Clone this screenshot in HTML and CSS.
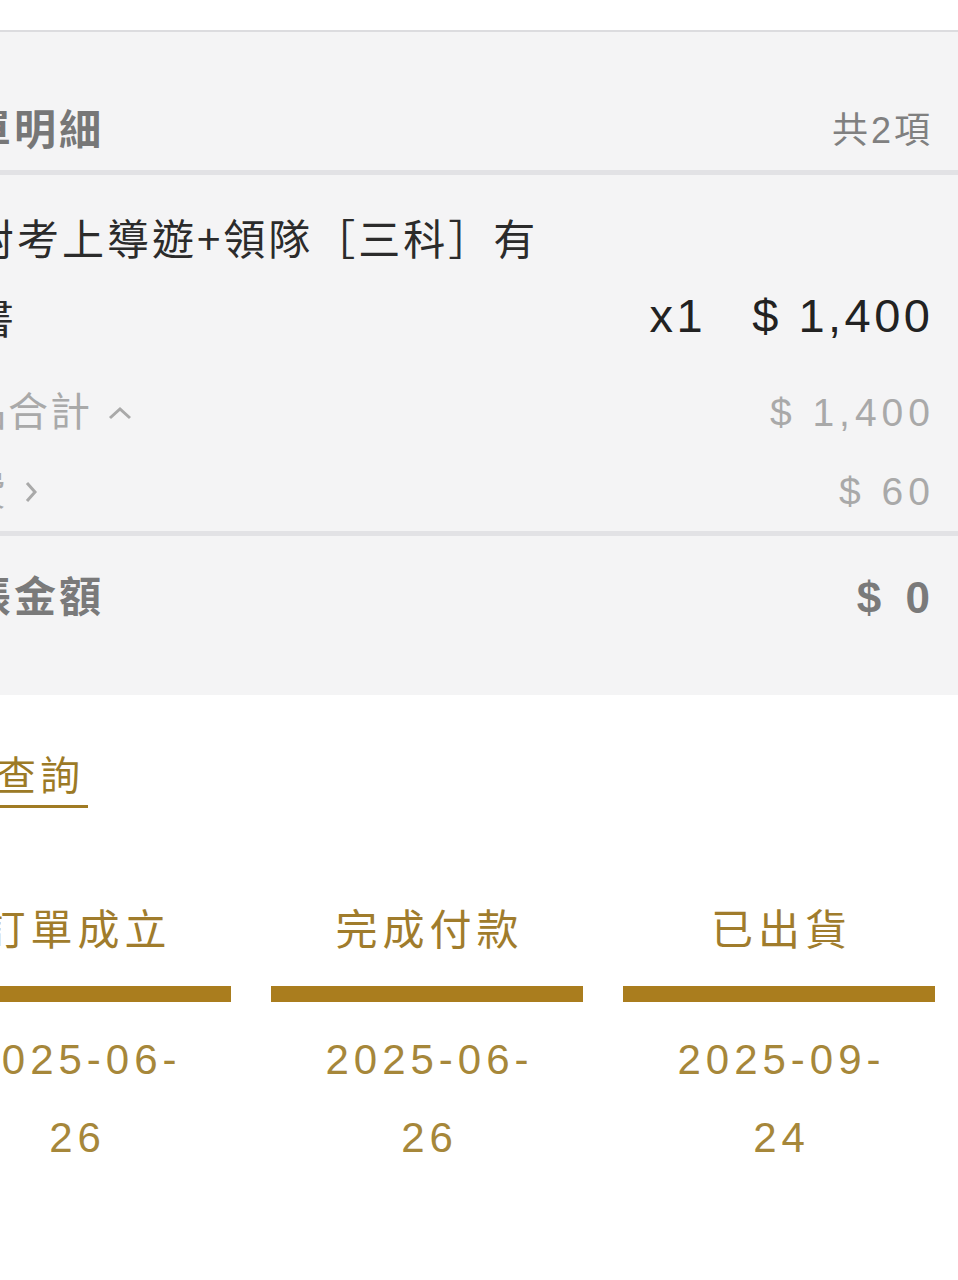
FILE: index.html
```html
<!DOCTYPE html>
<html>

<head>
    <meta charset="UTF-8">
    <title>訂單明細</title>
    <link rel="stylesheet" href="styles.css">
</head>

<body>
    <div class="page">
        <!-- 訂單明細 -->
        <section class="order-panel">
            <div class="panel-head">
                <h2 class="panel-title">訂單明細</h2>
                <span class="panel-count">共2項</span>
            </div>

            <div class="item">
                <p class="item-name">絕對考上導遊+領隊［三科］有聲書</p>
                <div class="item-price">
                    <span class="qty">x1</span>
                    <span class="price">$ 1,400</span>
                </div>
            </div>

            <div class="summary">
                <div class="summary-row">
                    <span class="summary-label">商品合計
                        <svg class="chev" width="24" height="14" viewBox="0 0 24 14">
                            <path d="M2 12 L12 3 L22 12" fill="none" stroke="#a9a9a9" stroke-width="3" />
                        </svg>
                    </span>
                    <span class="summary-value">$ 1,400</span>
                </div>
                <div class="summary-row">
                    <span class="summary-label">運費
                        <svg class="chev" width="14" height="22" viewBox="0 0 14 22">
                            <path d="M3 2 L11 11 L3 20" fill="none" stroke="#a9a9a9" stroke-width="3" />
                        </svg>
                    </span>
                    <span class="summary-value">$ 60</span>
                </div>
            </div>

            <div class="total-row">
                <span class="total-label">入帳金額</span>
                <span class="total-value">$ 0</span>
            </div>
        </section>

        <!-- 物流查詢 -->
        <div class="track">
            <a class="track-link" href="#">物流查詢</a>
        </div>

        <!-- 訂單進度 -->
        <ol class="steps">
            <li class="step">
                <div class="step-title">訂單成立</div>
                <div class="step-bar"></div>
                <div class="step-date">2025-06-<wbr>26</div>
            </li>
            <li class="step">
                <div class="step-title">完成付款</div>
                <div class="step-bar"></div>
                <div class="step-date">2025-06-<wbr>26</div>
            </li>
            <li class="step">
                <div class="step-title">已出貨</div>
                <div class="step-bar"></div>
                <div class="step-date">2025-09-<wbr>24</div>
            </li>
        </ol>
    </div>
</body>

</html>
```

FILE: styles.css
```css
* {
    box-sizing: border-box;
}

body {
    margin: 0;
    overflow: hidden;
    background-color: #fff;
    font-family: "Liberation Sans", "Noto Sans CJK TC", sans-serif;
}

.page {
    margin-left: -92px;
    padding-top: 30px;
}

.order-panel {
    background-color: #f4f4f5;
    border-top: 2px solid #dcdcdf;
}

.panel-head {
    display: flex;
    justify-content: space-between;
    align-items: center;
    padding: 78px 28px 18px 16px;
    line-height: 42px;
    border-bottom: 5px solid #e2e2e5;
}

.panel-title {
    margin: 0;
    font-size: 42px;
    font-weight: 700;
    letter-spacing: 3px;
    color: #777;
}

.panel-count {
    font-size: 36px;
    letter-spacing: 3px;
    margin-right: -3px;
    color: #808080;
}

.item {
    display: flex;
    justify-content: space-between;
    align-items: flex-end;
    padding: 22px 28px 0 19px;
}

.item-name {
    margin: 0;
    width: 640px;
    font-family: "Noto Sans CJK TC", sans-serif;
    font-size: 42px;
    line-height: 79px;
    letter-spacing: 3px;
    color: #2b2b2b;
}

.item-price {
    display: flex;
    gap: 46px;
    font-size: 47px;
    line-height: 79px;
    letter-spacing: 3.5px;
    margin-right: -3.5px;
    color: #222;
}

.summary {
    padding-top: 18px;
    border-bottom: 5px solid #e2e2e5;
}

.summary-row {
    display: flex;
    justify-content: space-between;
    align-items: center;
    padding: 0 28px 0 16px;
    line-height: 79px;
    color: #a9a9a9;
}

.summary-label {
    display: flex;
    align-items: center;
    gap: 16px;
    font-size: 40px;
    letter-spacing: 2px;
}

.summary-value {
    font-size: 39px;
    letter-spacing: 5px;
    margin-right: -5px;
}

.total-row {
    display: flex;
    justify-content: space-between;
    align-items: center;
    padding: 37px 28px 72px 16px;
    line-height: 50px;
    font-weight: 700;
    color: #7a7a7a;
}

.total-label {
    font-size: 42px;
    letter-spacing: 3px;
}

.total-value {
    font-size: 44px;
    letter-spacing: 6px;
    margin-right: -6px;
}

.track {
    display: flex;
    padding-top: 56px;
}

.track-link {
    padding-bottom: 4px;
    padding-right: 4px;
    font-size: 40px;
    line-height: 50px;
    letter-spacing: 4px;
    color: #9c7a26;
    text-decoration: none;
    border-bottom: 3px solid #a07b23;
}

.steps {
    list-style: none;
    margin: 98px 0 0;
    padding: 0 23px 0 11px;
    display: grid;
    grid-template-columns: repeat(3, 1fr);
    gap: 40px;
}

.step {
    text-align: center;
}

.step-title {
    padding-left: 5px;
    font-size: 42px;
    line-height: 50px;
    letter-spacing: 5px;
    color: #a07c2c;
}

.step-bar {
    height: 16px;
    margin-top: 30px;
    background-color: #aa7d1e;
}

.step-date {
    max-width: 240px;
    margin: 19px auto 0;
    padding-left: 5px;
    font-size: 42px;
    line-height: 78px;
    letter-spacing: 5px;
    color: #a6873a;
}
```
